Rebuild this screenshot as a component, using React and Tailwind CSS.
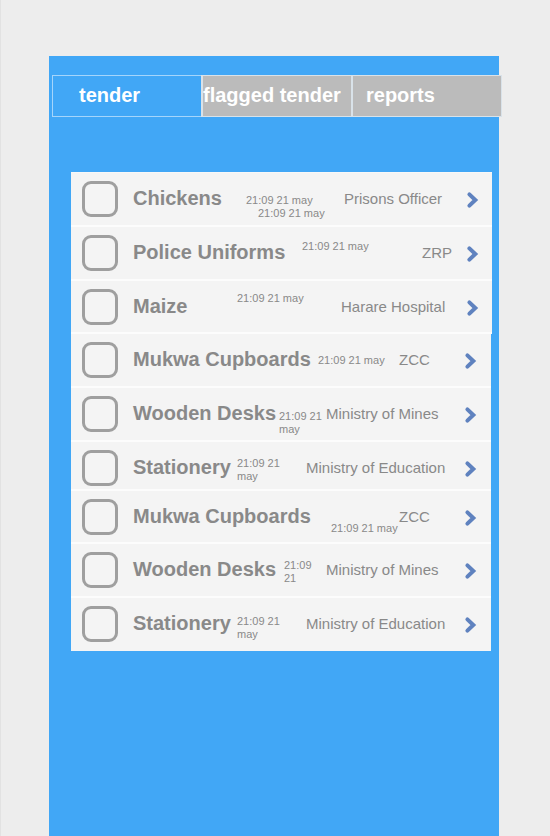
import React from "react";

const tabs = [
  { label: "tender", style: "border border-r-0 bg-[#41a7f6] pl-[26px] border-[#a5d5fb]" },
  { label: "flagged tender", style: "border-y border-l-2 bg-[#bbbbbb] border-[#d9e2e9]" },
  { label: "reports", style: "border-y border-l-2 border-r bg-[#bbbbbb] pl-[13px] border-[#d9e2e9]" },
];

const tenders = [
  {
    name: "Chickens",
    times: ["21:09 21 may", "21:09 21 may"],
    agency: "Prisons Officer",
    row: "h-[54px] grid-cols-[62px_113px_98px_1fr_26px]",
    time: "pt-[13px] whitespace-nowrap",
  },
  {
    name: "Police Uniforms",
    times: ["21:09 21 may"],
    agency: "ZRP",
    row: "h-[54px] grid-cols-[62px_169px_120px_1fr_26px]",
    time: "pt-[5px] whitespace-nowrap",
  },
  {
    name: "Maize",
    times: ["21:09 21 may"],
    agency: "Harare Hospital",
    row: "h-[53px] grid-cols-[62px_104px_104px_1fr_26px]",
    time: "pt-[3px] whitespace-nowrap",
  },
  {
    name: "Mukwa Cupboards",
    times: ["21:09 21 may"],
    agency: "ZCC",
    row: "h-[54px] mr-px grid-cols-[62px_185px_81px_1fr_27px]",
    time: "pt-3 whitespace-nowrap",
  },
  {
    name: "Wooden Desks",
    times: ["21:09 21 may"],
    agency: "Ministry of Mines",
    row: "h-[54px] mr-px grid-cols-[62px_146px_47px_1fr_27px]",
    time: "pt-[14px]",
  },
  {
    name: "Stationery",
    times: ["21:09 21 may"],
    agency: "Ministry of Education",
    row: "h-[49px] mr-px grid-cols-[62px_104px_69px_1fr_27px]",
    time: "pt-[7px] pr-4",
  },
  {
    name: "Mukwa Cupboards",
    times: ["21:09 21 may"],
    agency: "ZCC",
    row: "h-[53px] mr-px grid-cols-[62px_198px_68px_1fr_27px]",
    time: "pt-[23px] whitespace-nowrap",
  },
  {
    name: "Wooden Desks",
    times: ["21:09 21"],
    agency: "Ministry of Mines",
    row: "h-[54px] mr-px grid-cols-[62px_151px_42px_1fr_27px]",
    time: "pt-[7px] pr-2",
  },
  {
    name: "Stationery",
    times: ["21:09 21 may"],
    agency: "Ministry of Education",
    row: "h-[53px] mr-px grid-cols-[62px_104px_69px_1fr_27px]",
    time: "pt-[9px] pr-4",
  },
];

function Chevron() {
  return (
    <svg width="14" height="18" viewBox="0 0 14 18" fill="none" aria-hidden="true">
      <path d="M3.4 3.4 L9.3 9 L3.4 14.6" stroke="#5f82bf" strokeWidth="4" strokeLinecap="round" />
    </svg>
  );
}

function TenderRow({ tender, id }) {
  return (
    <li className={`grid items-start border-b-2 border-[#fcfcfc] bg-[#f4f4f4] pt-2 last:border-b-0 ${tender.row}`}>
      <input
        id={id}
        type="checkbox"
        className="ml-[11px] size-9 appearance-none rounded-[9px] border-3 border-[#9f9f9f] bg-[#f4f4f4] checked:bg-[#9f9f9f]"
      />
      <label htmlFor={id} className="text-xl leading-[35px] font-bold whitespace-nowrap">
        {tender.name}
      </label>
      <div className={`text-[11px] leading-[13px] ${tender.time}`}>
        <time className="block">{tender.times[0]}</time>
        {tender.times.length > 1 && <time className="block pl-3">{tender.times[1]}</time>}
      </div>
      <span className="text-[15px] leading-[35px] whitespace-nowrap">{tender.agency}</span>
      <button type="button" aria-label={`Open ${tender.name}`} className="mt-[10px] w-fit justify-self-start">
        <Chevron />
      </button>
    </li>
  );
}

export default function App() {
  return (
    <div className="min-h-screen border-l border-[#e2e2e2] bg-[#ededed] pt-14 pr-[51px] pl-12 font-['Liberation_Sans',Arial,sans-serif]">
      <main className="min-h-[calc(100vh-56px)] bg-[#41a7f6] pt-[19px]">
        <nav className="-mr-[3px] ml-[3px] grid h-[42px] grid-cols-[149fr_150fr_151fr]">
          {tabs.map((tab) => (
            <button
              key={tab.label}
              type="button"
              className={`pb-0.5 text-left text-xl font-bold whitespace-nowrap text-white ${tab.style}`}
            >
              {tab.label}
            </button>
          ))}
        </nav>
        <ul className="mt-[55px] mr-[7px] ml-[22px] border-t border-[#f8f8f8] text-[#898989]">
          {tenders.map((tender, index) => (
            <TenderRow key={index} id={`tender-${index}`} tender={tender} />
          ))}
        </ul>
      </main>
    </div>
  );
}
